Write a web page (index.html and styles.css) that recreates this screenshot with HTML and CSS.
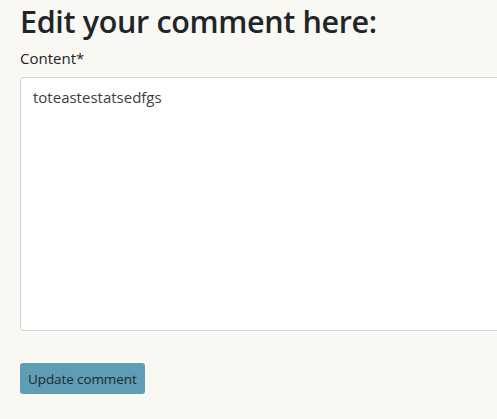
FILE: index.html
```html
<!DOCTYPE html>
<html lang="en">
<head>
<meta charset="utf-8">
<link rel="stylesheet" href="styles.css">
</head>
<body>
<main class="page">
  <h1 class="title">Edit your comment here:</h1>
  <form class="form">
    <label class="label" for="content">Content*</label>
    <textarea id="content" class="area">toteastestatsedfgs</textarea>
    <button type="button" class="btn">Update comment</button>
  </form>
</main>
</body>
</html>
```

FILE: styles.css
```css
html, body {
  margin: 0;
  padding: 0;
  background: #f9f8f3;
  overflow: hidden;
}
.page {
  padding: 0 0 0 20px;
  font-family: "Open Sans", "Noto Sans", sans-serif;
  color: #212529;
}
.title {
  margin: 0;
  padding-top: 3px;
  font-size: 30.5px;
  font-weight: 600;
  line-height: 37px;
  letter-spacing: -0.35px;
}
.form {
  display: flex;
  flex-direction: column;
  align-items: flex-start;
}
.label {
  margin-top: 8px;
  font-size: 15px;
  line-height: 20px;
}
.area {
  margin-top: 9px;
  width: 520px;
  height: 254px;
  box-sizing: border-box;
  border: 1px solid #d0d3d6;
  border-radius: 4px;
  background: #fff;
  padding: 8px 12px;
  font-family: "Open Sans", "Noto Sans", sans-serif;
  font-size: 15px;
  line-height: 22px;
  color: #3a3f44;
  resize: none;
}
.btn {
  margin-top: 32px;
  height: 31px;
  padding: 0 8px;
  border: none;
  border-radius: 3px;
  background: #5f9db4;
  color: #1c2a33;
  font-family: "Open Sans", "Noto Sans", sans-serif;
  font-size: 13.5px;
  letter-spacing: -0.1px;
}
```
